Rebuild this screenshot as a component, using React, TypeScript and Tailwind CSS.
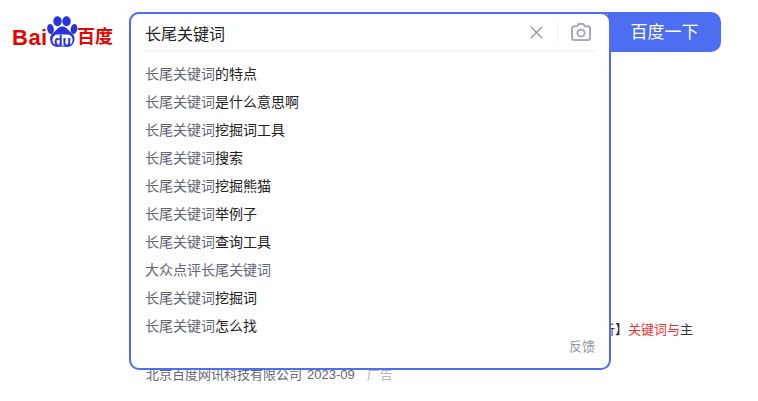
import React from 'react';
import { X } from 'lucide-react';

const FONT = "font-['Arial','Liberation_Sans','Noto_Sans_CJK_SC',sans-serif]";

const suggestions = [
  { hit: '长尾关键词', rest: '的特点' },
  { hit: '长尾关键词', rest: '是什么意思啊' },
  { hit: '长尾关键词', rest: '挖掘词工具' },
  { hit: '长尾关键词', rest: '搜索' },
  { hit: '长尾关键词', rest: '挖掘熊猫' },
  { hit: '长尾关键词', rest: '举例子' },
  { hit: '长尾关键词', rest: '查询工具' },
  { hit: '大众点评长尾关键词', rest: '' },
  { hit: '长尾关键词', rest: '挖掘词' },
  { hit: '长尾关键词', rest: '怎么找' },
];

const BaiduLogo = () => (
  <div className="relative w-[101px] h-[32px] shrink-0 select-none">
    <span className="absolute left-0 top-[9px] font-['Liberation_Sans',sans-serif] font-bold text-[22px] leading-[26px] tracking-[0.5px] text-[#e10601]">
      Bai
    </span>
    <svg className="absolute left-[35px] top-0" width="31" height="33" viewBox="0 0 31 33">
      <ellipse cx="3.500" cy="13" rx="3.300" ry="5" fill="#2932e1" transform="rotate(-10 3.500 13)" />
      <ellipse cx="10.500" cy="5.200" rx="4.200" ry="5" fill="#2932e1" />
      <ellipse cx="19.500" cy="5.200" rx="4.200" ry="5" fill="#2932e1" />
      <ellipse cx="27" cy="13" rx="3.300" ry="5" fill="#2932e1" transform="rotate(10 27 13)" />
      <path
        d="M15.300 10.500c3.500 0 5 2.500 7 4.500 2.700 2.300 5.200 4 5.200 7.800 0 5-3.500 8.200-7 8.200-2 0-3.700-.5-5.200-.5s-3.200.5-5.200.5c-3.500 0-7-3.200-7-8.200 0-3.800 2.500-5.500 5.200-7.800 2-2 3.500-4.500 7-4.500z"
        fill="#2932e1"
      />
      <rect x="5.500" y="18.500" width="20" height="11" rx="5" fill="#ffffff" />
    </svg>
    <span className="absolute left-[42px] top-[17px] font-['Liberation_Sans',sans-serif] font-bold text-[14px] leading-[16px] text-[#2932e1]">
      du
    </span>
    <span className={`absolute left-[65px] top-[9px] ${FONT} font-bold text-[18px] leading-[24px] whitespace-nowrap text-[#e10601]`}>
      百度
    </span>
  </div>
);

const CameraIcon = () => (
  <svg width="20" height="18" viewBox="0 0 20 18" fill="none" stroke="#a7aab5" strokeWidth="2">
    <path d="M6.500 3.200 7.500 1h5l1 2.200h3.300A2.200 2.200 0 0 1 19 5.400v9.400a2.200 2.200 0 0 1-2.200 2.200H3.200A2.200 2.200 0 0 1 1 14.800V5.400a2.200 2.200 0 0 1 2.200-2.200z" strokeLinejoin="round" />
    <circle cx="10" cy="10" r="3.600" />
  </svg>
);

export default function App() {
  return (
    <div className={`relative h-[401px] w-[758px] overflow-hidden bg-white ${FONT}`}>
      {/* header */}
      <div className="flex items-start pt-3 pl-3">
        <div className="mt-[4px] mr-4">
          <BaiduLogo />
        </div>
        <div className="flex">
          <div className="w-[481px] h-10 border-2 border-[#4e6ef2] rounded-l-[10px]" />
          <button className="w-[111px] h-10 bg-[#4e6ef2] rounded-r-[10px] text-[17px] pt-px pr-[2px] text-white">百度一下</button>
        </div>
      </div>

      {/* result behind the dropdown */}
      <div className="w-[547px] ml-[146px] mt-[268px]">
        <div className="flex justify-end text-[13px] leading-5 whitespace-nowrap text-[#333]">
          <span>分析】</span>
          <span className="text-[#f73131]">关键词与</span>
          <span>主</span>
        </div>
        <div className="mt-[25px] text-[13px] leading-5 text-[#626675] whitespace-nowrap">
          北京百度网讯科技有限公司
          <span className="ml-[5px]">2023-09</span>
          <span className="ml-3 text-[#b4b7c0]">广告</span>
        </div>
      </div>

      {/* dropdown */}
      <div className="absolute left-[129px] top-3 w-[482px] h-[358px] bg-white border-2 border-[#4e6ef2] rounded-[10px]">
        <div className="mx-[14px] h-[38px] flex items-center border-b-2 border-[#f5f5f6]">
          <span className="flex-1 text-[16px] pt-[6px] text-[#222]">长尾关键词</span>
          <X size={21} strokeWidth={1.500} className="text-[#8f93a0] mr-[10px]" />
          <div className="w-px h-[18px] bg-[#f0f0f2] mr-[13px]" />
          <span className="mr-[4px] flex"><CameraIcon /></span>
        </div>
        <ul className="mt-[8px]">
          {suggestions.map((item) => (
            <li key={item.hit + item.rest} className="mx-[14px] h-7 text-[14px] leading-7 text-[#222]">
              <span className="text-[#626675]">{item.hit}</span>
              {item.rest}
            </li>
          ))}
        </ul>
        <div className="absolute right-[14px] bottom-[11px] text-[13px] leading-5 text-[#9195a3]">反馈</div>
      </div>
    </div>
  );
}
